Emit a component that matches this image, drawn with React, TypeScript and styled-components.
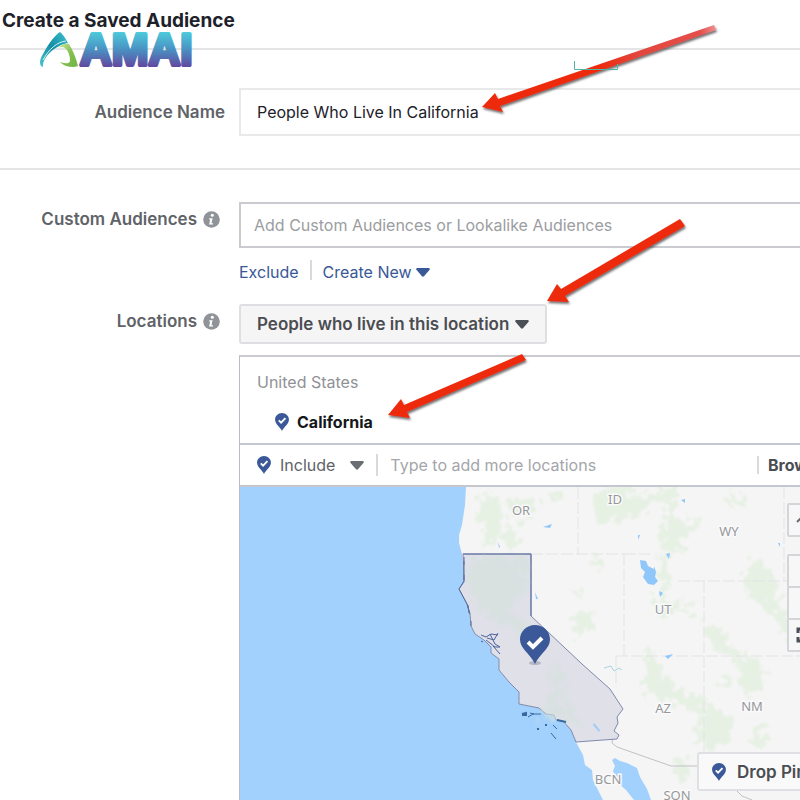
import React from "react";
import styled, { createGlobalStyle, css } from "styled-components";

const GlobalStyle = createGlobalStyle`
  *, *::before, *::after { box-sizing: border-box; }
  body {
    margin: 0;
    background: #fff;
    color: #1d2129;
    font-family: Inter, "Liberation Sans", sans-serif;
    font-size: 16px;
  }
  button, input, select { font: inherit; color: inherit; margin: 0; }
`;

const Page = styled.main`
  position: relative;
  min-height: 100vh;
  overflow: hidden;
  display: flex;
  flex-direction: column;
`;

const Header = styled.header`
  height: 50px;
  padding: 9px 2px 0;
  border-bottom: 2px solid #e4e5e7;
`;

const Title = styled.h1`
  margin: 0;
  font-size: 19px;
  line-height: 24px;
  font-weight: 700;
`;

const Row = styled.div`
  display: grid;
  grid-template-columns: 225px minmax(0, 1fr);
  column-gap: 14px;
  margin-right: -60px;
`;

const NameSection = styled.section`
  padding: 38px 0 32px;
  border-bottom: 2px solid #e4e5e7;
`;

const AudienceSection = styled.section`
  flex: 1;
  display: flex;
  flex-direction: column;
  padding-top: 32px;
`;

const labelText = css`
  color: #606367;
  font-size: 17px;
  line-height: 24px;
  font-weight: 600;
`;

const LabelCell = styled.div<{ $top: number; $inset?: boolean }>`
  ${labelText}
  display: flex;
  align-items: flex-start;
  justify-content: flex-end;
  gap: 6px;
  padding-top: ${(p) => p.$top}px;
  padding-right: ${(p) => (p.$inset ? 5 : 0)}px;
`;

const InfoButton = styled.button`
  display: flex;
  align-items: center;
  height: 24px;
  padding: 0;
  border: 0;
  background: none;
`;

const TextField = styled.input<{ $strong?: boolean }>`
  display: block;
  width: 100%;
  height: ${(p) => (p.$strong ? 46 : 48)}px;
  padding: 0 ${(p) => (p.$strong ? 13 : 16)}px;
  border: ${(p) => (p.$strong ? "2px solid #c9cbd1" : "2px solid #e8e9eb")};
  background: #fff;
  outline: 0;
  font-size: 16px;
  &::placeholder { color: #9b9da1; opacity: 1; }
`;

const LinkLine = styled.nav`
  display: flex;
  align-items: center;
  gap: 11px;
  height: 24px;
  margin: 12px 0 20px;
`;

const ActionLink = styled.a`
  display: flex;
  align-items: center;
  gap: 4px;
  color: #385898;
  font-size: 16px;
  line-height: 24px;
  text-decoration: none;
`;

const Divider = styled.span<{ $height: number }>`
  width: 2px;
  height: ${(p) => p.$height}px;
  background: #d8dadd;
`;

const LinkDivider = styled(Divider)`
  align-self: flex-start;
`;

const MapRow = styled(Row)`
  flex: 1;
`;

const Stack = styled.div`
  display: flex;
  flex-direction: column;
  align-items: stretch;
`;

const ScopeButton = styled.button`
  align-self: flex-start;
  display: flex;
  align-items: center;
  gap: 6px;
  height: 40px;
  margin-bottom: 11px;
  padding: 0 16px;
  border: 2px solid #dddfe2;
  border-radius: 3px;
  background: #f5f5f6;
  color: #4b4d52;
  font-size: 17px;
  font-weight: 600;
`;

const LocationPanel = styled.div`
  flex: 1;
  display: flex;
  flex-direction: column;
  border-top: 2px solid #c9cbd1;
  border-left: 1px solid #b9bcc4;
`;

const Country = styled.div`
  padding: 13px 17px 0;
  color: #909296;
  font-size: 16px;
  line-height: 24px;
`;

const Place = styled.div`
  display: flex;
  align-items: center;
  gap: 8px;
  height: 24px;
  margin: 16px 0 9px 35px;
  color: #15171a;
  font-size: 16px;
  font-weight: 700;
`;

const SearchBar = styled.div`
  display: flex;
  align-items: center;
  height: 44px;
  padding-left: 17px;
  border-top: 2px solid #c4c7cf;
  border-bottom: 2px solid #c4c7cf;
`;

const IncludeButton = styled.button`
  display: flex;
  align-items: center;
  padding: 0;
  border: 0;
  background: none;
  color: #606367;
  font-size: 16px;
  gap: 9px;
  margin-right: 12px;
  & > svg:last-child { margin-left: 6px; }
`;

const PlaceInput = styled.input`
  flex: 1;
  min-width: 0;
  height: 30px;
  padding: 0 12px;
  border: 0;
  outline: 0;
  background: none;
  font-size: 16px;
  &::placeholder { color: #a4a6aa; opacity: 1; }
`;

const BrowseButton = styled.button`
  width: 101px;
  padding: 0 9px;
  border: 0;
  background: none;
  color: #4b4d52;
  font-size: 16px;
  font-weight: 700;
  text-align: left;
`;

const MapArea = styled.div`
  position: relative;
  flex: 1;
  min-height: 313px;
  overflow: hidden;
  background: #f5f5f5;
`;

const MapSvg = styled.svg`
  position: absolute;
  inset: 0;
  display: block;
`;

const MapControls = styled.div`
  position: absolute;
  top: 16px;
  right: 21px;
  width: 52px;
  display: flex;
  flex-direction: column;
`;

const MapButton = styled.button<{ $gap?: boolean }>`
  display: flex;
  align-items: center;
  height: 34px;
  padding: 0 7px;
  margin-bottom: ${(p) => (p.$gap ? 17 : -2)}px;
  border: 2px solid #d3d5d8;
  border-radius: 2px;
  background: #f7f7f8;
  color: #4b4f56;
`;

const DropPin = styled.button`
  position: absolute;
  top: 265px;
  right: 23px;
  width: 140px;
  height: 39px;
  display: flex;
  align-items: center;
  gap: 11px;
  padding: 0 13px;
  border: 2px solid #dfe0e3;
  border-radius: 3px;
  background: #f9f9fa;
  color: #4b4d52;
  font-size: 17px;
  font-weight: 600;
  white-space: nowrap;
`;

const Overlay = styled.svg`
  position: absolute;
  top: 0;
  left: 0;
  pointer-events: none;
`;

function Caret({ color = "#4b4f56" }: { color?: string }) {
  return (
    <svg width="14" height="9" viewBox="0 0 14 9" aria-hidden="true">
      <path d="M1.500 0h11c1.200 0 1.700 1.200.9 2L8 8.300q-1 .9-2 0L.6 2C-.2 1.200.3 0 1.500 0Z" fill={color} />
    </svg>
  );
}

function Info() {
  return (
    <svg width="17" height="17" viewBox="0 0 17 17" aria-hidden="true">
      <circle cx="8.500" cy="8.500" r="8.300" fill="#909398" />
      <circle cx="9.300" cy="4.300" r="1.500" fill="#fff" />
      <path d="M6.300 7.200h3.300L8.500 12.200h1.500v1.400H6.100L7.200 8.600H6Z" fill="#fff" />
    </svg>
  );
}

function Pin() {
  return (
    <svg width="14" height="18" viewBox="0 0 30 39" aria-hidden="true">
      <path d="M15 0C6.500 0 0 6.500 0 14.500 0 24 11 30 15 39 19 30 30 24 30 14.500 30 6.500 23.500 0 15 0Z" fill="#3b5998" />
      <path d="m8 16 5 5 9.500-10" fill="none" stroke="#fff" strokeWidth="4" />
    </svg>
  );
}

const forests = [
  "M240 8l18 4 6 20-10 24-12 4 4-14-8-16Z",
  "M268 16l18-4 12 4-4 14-14 4-8-6ZM262 40l12 6 6 18-10 2-6-14ZM312 2l8 6-4 8-6-8Z",
  "M358 0h36l-4 9 24-2 10-7h16l-6 10-18 4-14 14-22 4-14 6-10-4-2-16Z",
  "M426 4l12-2-4 22 6 12 16-6 8 4-10 12-12 4-2 18-14-4-6-16 4-12Z",
  "M490 4l8 4 6 12-8 2-6-8Z",
  "M418 66l10 4 2 20-6 24 18 4 16-6-2 10-22 4-12 8-8-18 6-14Z",
  "M506 82l12-10 14 14 8 18-2 14 18 12 10 22-6 8-18-16-10-18-16-14-12-6Z",
  "M332 126l12-6 10 10-4 14-12 8-8-10ZM352 68l12 4-4 12-8-4ZM334 100l10 2-4 12Z",
  "M470 130l12 10 8 20 22 12-2 10-22-10-16-16-8-14Z",
  "M500 176l16-8 8 10-4 24-14 6-8-16Z",
  "M408 162l8 8 4 16 18 14 24 14 20 10-2 10-22-8-24-10-20-6-12-14 4-18Z",
  "M456 234l16-6 20-2 4 14-14 18-14 8-10-14ZM512 240l8-4 8 22-10 8-8-10Z",
  "M434 268l12 4 4 14-8 12-10-10ZM484 190l10 0-6 8-12 4Z",
];

const caliForests = [
  "M228 76l24-6 36 2-4 34-16 16 6 10-18 6-22-20-8-24Z",
  "M258 120l22 10 10 14-2 18-16-20-20-8Z",
  "M312 177l14 18-8 20-20 24 10-24Z",
  "M304 216l18-2 14 10 4 14-14-4-16-2-8-10Z",
];

function UsMap() {
  return (
    <MapSvg width="560" height="800" viewBox="0 0 560 800" role="img" aria-label="Map of the western United States">
      <defs>
        <filter id="soft" x="-5%" y="-5%" width="110%" height="110%">
          <feTurbulence type="fractalNoise" baseFrequency="0.12" numOctaves="3" seed="4" result="n" />
          <feDisplacementMap in="SourceGraphic" in2="n" scale="26" xChannelSelector="R" yChannelSelector="G" result="d" />
          <feGaussianBlur in="d" stdDeviation="1.200" />
        </filter>
      </defs>
      <rect width="560" height="800" fill="#f5f5f5" />
      <g fill="#dfeeda" opacity="0.65" filter="url(#soft)">
        {forests.map((d) => <path key={d} d={d} />)}
      </g>
      <path
        d="M0 0H226L225 18 222 38 219 48 219 56 222 67 224 95 219 102 227 117 230 127 231 139 235 147 244 153 251 160 251 166 259 172 259 183 269 195 279 205 279 217 299 221 306 227 314 228 316 233 323 234 331 243 336 255 343 268 345 278 352 283 353 293 358 303 363 313V800H0Z"
        fill="#a3d1fd"
      />
      <path d="M372 273L375 271 380 274 387 276 397 281 400 290 407 302 411 313V800H394V313L386 303 378 296 373 284 375 279Z" fill="#a3d1fd" />
      <g fill="none" stroke="#e2e3e5" strokeWidth="1" strokeDasharray="12 3">
        <path d="M291 67H384M338 0V67M384 67H410M384 67V169M376 169H560M464 94V279M438 94H560M544 0V94M376 169V200" />
      </g>
      <path d="M373 249 372 256 377 260 431 279H458V298H491L502 309 512 313" fill="none" stroke="#c0c1c5" strokeWidth="1" />
      <path
        d="M223 67H291V129L342 177 370 202 383 222 377 230 378 236 374 244 379 248 377 252 336 255 331 243 323 234 316 233 314 228 306 227 299 221 279 217 279 205 269 195 259 183 259 172 251 166 251 160 244 153 235 147 231 139 230 127 227 117 219 102 224 95Z"
        fill="#dfe0e8" stroke="#808aac" strokeWidth="1"
      />
      <g fill="#d4e2db" opacity="0.6" filter="url(#soft)">
        {caliForests.map((d) => <path key={d} d={d} />)}
      </g>
      <path
        d="M223 67H291V129M224 70v24l-5 8 8 15 3 10M224 74v4M224 88v5M228 118l1 8M231 134v5"
        fill="none" stroke="#5a6ea0" strokeWidth="1"
      />
      <path
        d="M241 148l5 2 5-3 7 1M250 147l5 10 5 3-5 0-9-7M247 151l7 2 4-7M241 154l2 1M253 159l7 8"
        fill="none" stroke="#4c639c" strokeWidth="1"
      />
      <path d="M282 227l4-1v2h-4M317 233l9 2M297 242h2M305 238l2 0" fill="none" stroke="#38699f" strokeWidth="2" />
      <path d="M288 230l5-3 8 0M290 226l4 1M313 238l4 4M311 246l5 6" fill="none" stroke="#38699f" strokeWidth="1" />
      <g fill="#8fc7fb">
        <path d="M400 73l6 1 2 5 6 3v-3l2 6-1 5 3 4-4 4-6-1-5-7 2-5-4-4Z" />
        <path d="M441 13l4-1v4ZM426 67l4-1-1 6ZM419 104l4 2-3 4ZM425 169l8-2-5 5ZM303 40l9-3-2 4ZM277 48l2 7M298 112l-3-7 1 7ZM258 55l1 6 1-1ZM398 48h2l-2 5ZM538 56h2v4Z" />
        <path d="M353 238l6 7 1-2-6-7Z" opacity=".8" />
      </g>
      <path d="M364 181l7-2 3 5 5-3 3 2" fill="none" stroke="#aad2df" strokeWidth="1" />
      <g
        fill="#96989c" stroke="#fafafa" strokeWidth="3" paintOrder="stroke"
        fontFamily='"Noto Sans", sans-serif' fontSize="13" textAnchor="middle"
      >
        <text x="281" y="28">OR</text>
        <text x="375" y="17">ID</text>
        <text x="489" y="49">WY</text>
        <text x="423" y="127">UT</text>
        <text x="423" y="226">AZ</text>
        <text x="512" y="224">NM</text>
        <text x="368" y="297">BCN</text>
        <text x="437" y="313">SON</text>
      </g>
      <ellipse cx="295" cy="176" rx="6" ry="2" fill="#8b90a0" opacity=".5" />
      <path d="M295 138c-8.500 0-15 6.500-15 14.500 0 9 10 14 15 24.500 5-10.500 15-15.500 15-24.500 0-8-6.500-14.500-15-14.500Z" fill="#3b5998" />
      <path d="m288 155 5 5 9-9" fill="none" stroke="#fff" strokeWidth="4" />
    </MapSvg>
  );
}

function Annotations() {
  return (
    <Overlay width="800" height="440" viewBox="0 0 800 440" aria-hidden="true">
      <defs>
        <linearGradient id="fade" gradientUnits="userSpaceOnUse" x1="600" y1="64" x2="718" y2="26">
          <stop offset="0" stopColor="#ee2c10" />
          <stop offset=".3" stopColor="#e2463c" />
          <stop offset=".85" stopColor="#e4504c" />
          <stop offset="1" stopColor="#f09a9a" />
        </linearGradient>
        <filter id="shadow" x="-10%" y="-10%" width="120%" height="125%">
          <feDropShadow dx="1" dy="2" stdDeviation="1" floodColor="#333" floodOpacity=".7" />
        </filter>
      </defs>
      <g fill="#ee2c10" filter="url(#shadow)">
        <path d="M482 107 495 93 498 99 714 25 716 30 500 106 503 112Z" fill="url(#fade)" />
        <path d="M547 301 557 284 561 289 680 219 685 226 565 296 569 302Z" />
        <path d="M388 415 401 399 404 405 522 354 526 360 407 412 410 418Z" />
      </g>
      <path d="M574.500 61V69.500H617.500V64" fill="none" stroke="#50b5a0" strokeWidth="1" />
    </Overlay>
  );
}

function Logo() {
  return (
    <Overlay width="200" height="72" viewBox="0 0 200 72" role="img" aria-label="AMAI">
      <defs>
        <linearGradient id="word" gradientUnits="userSpaceOnUse" x1="0" y1="32" x2="0" y2="67">
          <stop offset="0" stopColor="#4dcbdc" />
          <stop offset=".5" stopColor="#4a91c2" />
          <stop offset="1" stopColor="#6248a0" />
        </linearGradient>
        <linearGradient id="teal" x1="0" y1="1" x2="1" y2="0">
          <stop offset="0" stopColor="#49c5cf" />
          <stop offset=".5" stopColor="#168da5" />
          <stop offset="1" stopColor="#38c3d1" />
        </linearGradient>
        <linearGradient id="leaf" x1="0" y1="0" x2="1" y2="1">
          <stop offset="0" stopColor="#d0e6a0" />
          <stop offset=".5" stopColor="#85c04c" />
          <stop offset="1" stopColor="#6db548" />
        </linearGradient>
      </defs>
      <path d="M43 67C39 66 39 60 43 54 49 43 55 35 60 32Q63 34 68 43C56 45 42 57 43 67Z" fill="url(#teal)" />
      <path d="M43 60C49 49 57 42 66 41" fill="none" stroke="#d8f1f5" strokeWidth="1" />
      <path d="M58 48Q63 43 69 44 75 54 78 66L74 67Q64 67 60 62 69 65 70 61 70 52 65 48 62 46 58 48Z" fill="url(#leaf)" />
      <text
        x="80" y="65" fill="url(#word)" stroke="url(#word)" strokeWidth="4" strokeLinejoin="round"
        fontFamily='"Liberation Sans", sans-serif' fontWeight="700" fontSize="44"
      >
        AMAI
      </text>
    </Overlay>
  );
}

export default function App() {
  return (
    <Page>
      <GlobalStyle />
      <Header>
        <Title>Create a Saved Audience</Title>
      </Header>
      <NameSection>
        <Row>
          <LabelCell $top={12}>
            <label htmlFor="audience-name">Audience Name</label>
          </LabelCell>
          <TextField id="audience-name" defaultValue="People Who Live In California" />
        </Row>
      </NameSection>
      <AudienceSection>
        <Row>
          <LabelCell $top={5} $inset>
            <label htmlFor="custom-audiences">Custom Audiences</label>
            <InfoButton type="button" aria-label="About custom audiences"><Info /></InfoButton>
          </LabelCell>
          <Stack>
            <TextField $strong id="custom-audiences" placeholder="Add Custom Audiences or Lookalike Audiences" />
            <LinkLine>
              <ActionLink href="#exclude">Exclude</ActionLink>
              <LinkDivider $height={20} />
              <ActionLink href="#create">Create New <Caret color="#385898" /></ActionLink>
            </LinkLine>
          </Stack>
        </Row>
        <MapRow>
          <LabelCell $top={5} $inset>
            <label htmlFor="location-scope">Locations</label>
            <InfoButton type="button" aria-label="About locations"><Info /></InfoButton>
          </LabelCell>
          <Stack>
            <ScopeButton type="button" id="location-scope">
              People who live in this location <Caret />
            </ScopeButton>
            <LocationPanel>
              <Country>United States</Country>
              <Place><Pin /> California</Place>
              <SearchBar>
                <IncludeButton type="button"><Pin /> Include <Caret color="#6b6e73" /></IncludeButton>
                <Divider $height={22} />
                <PlaceInput aria-label="Add locations" placeholder="Type to add more locations" />
                <Divider $height={18} />
                <BrowseButton type="button">Browse</BrowseButton>
              </SearchBar>
              <MapArea>
                <UsMap />
                <MapControls>
                  <MapButton type="button" $gap aria-label="Collapse map">
                    <svg width="14" height="14" viewBox="0 0 14 14"><path d="m1 9 6-6 6 6" fill="none" stroke="#6b6e73" strokeWidth="2" /></svg>
                  </MapButton>
                  <MapButton type="button" aria-label="Zoom in" />
                  <MapButton type="button" aria-label="Zoom out" />
                  <MapButton type="button" aria-label="Full screen">
                    <svg width="16" height="16" viewBox="0 0 16 16"><path d="M2 6V2h4M10 2h4v4M14 10v4h-4M6 14H2v-4" fill="none" stroke="#4b4f56" strokeWidth="3" /></svg>
                  </MapButton>
                </MapControls>
                <DropPin type="button"><Pin /> Drop Pin</DropPin>
              </MapArea>
            </LocationPanel>
          </Stack>
        </MapRow>
      </AudienceSection>
      <Logo />
      <Annotations />
    </Page>
  );
}
